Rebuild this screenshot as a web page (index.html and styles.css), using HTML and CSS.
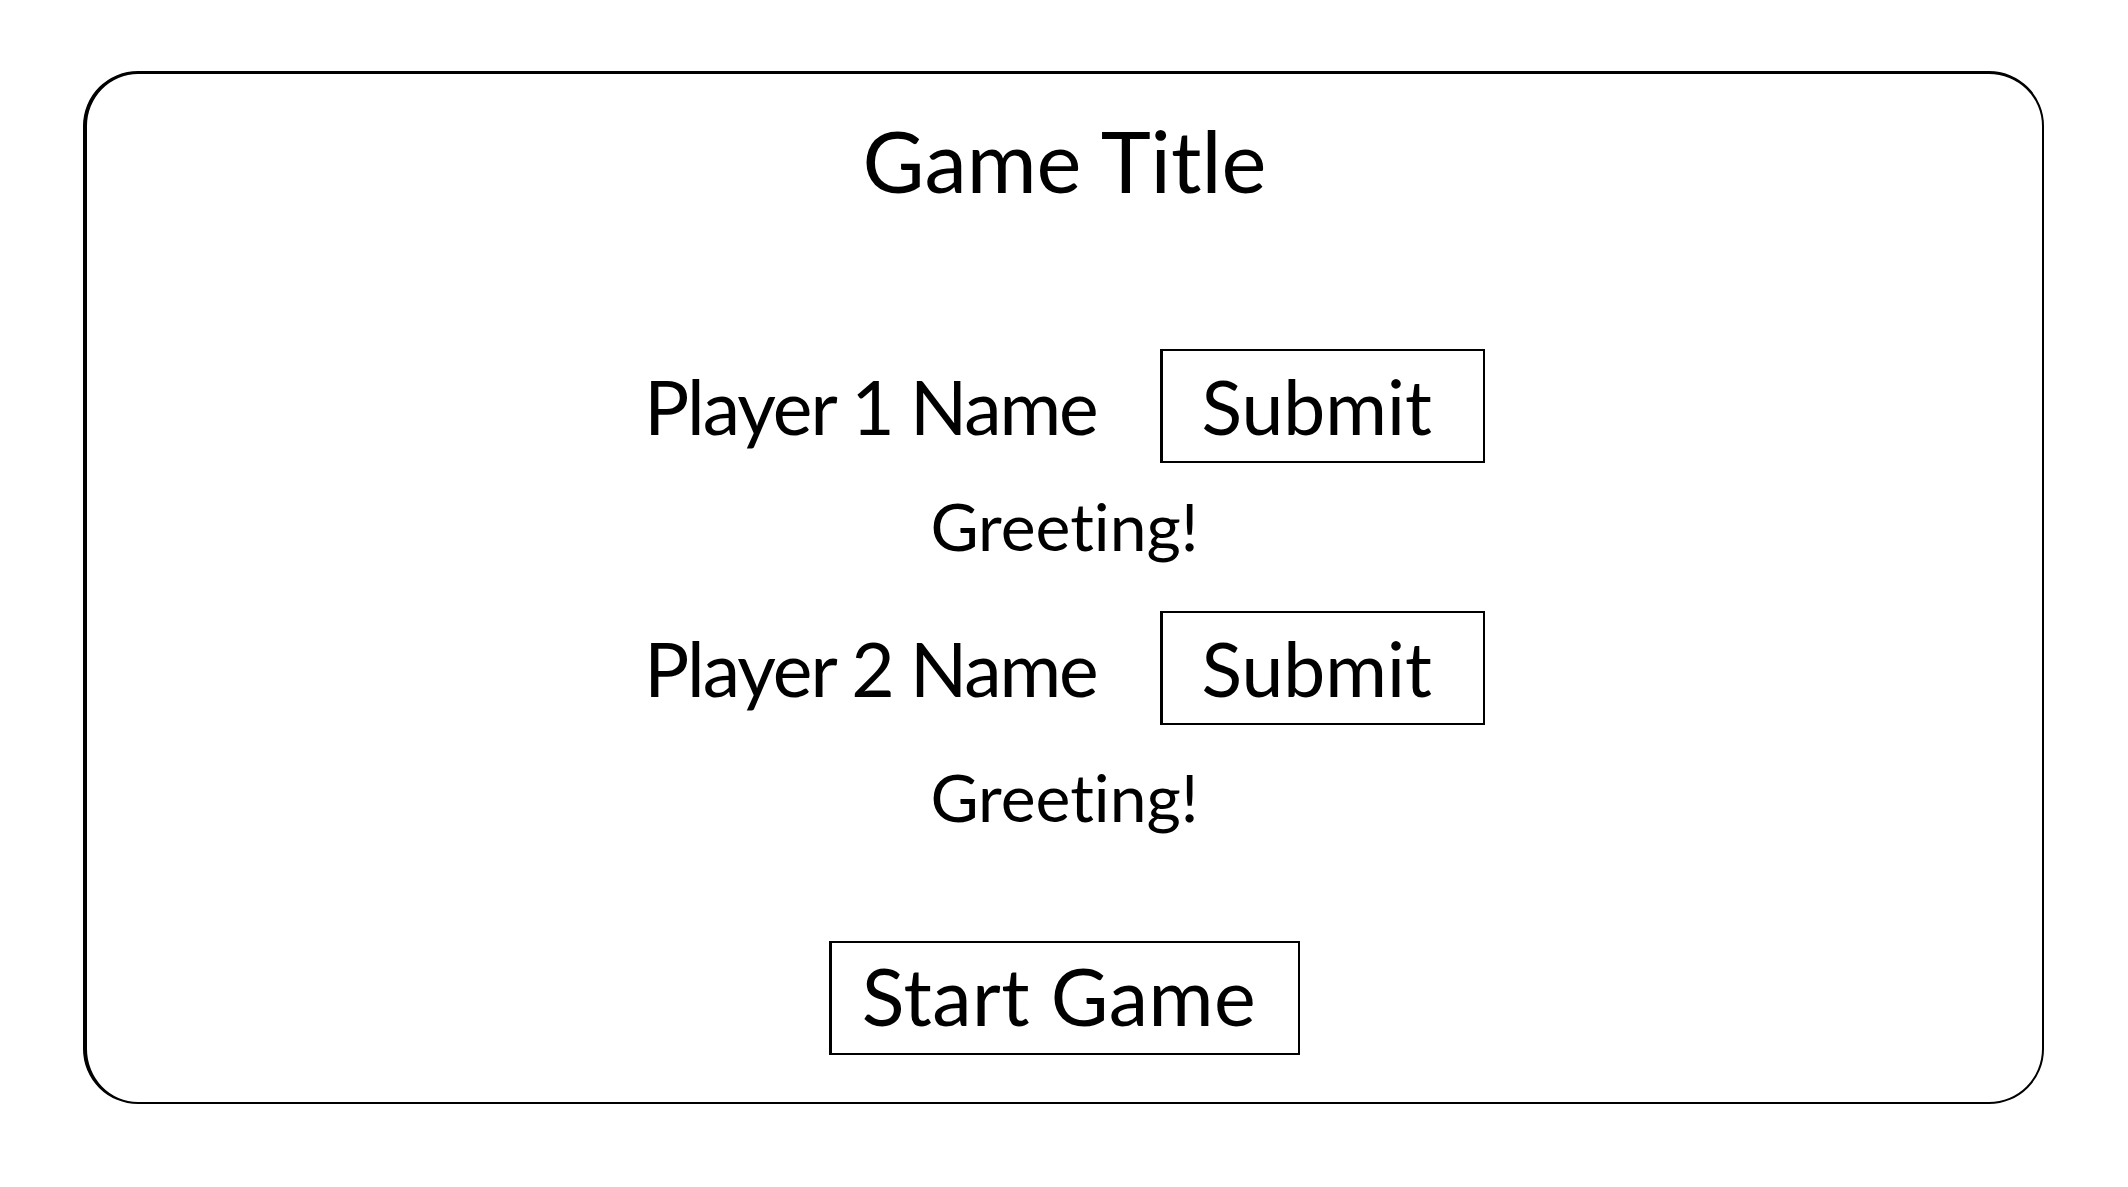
FILE: index.html
```html
<!DOCTYPE html>
<html>
<head>
<meta charset="utf-8">
<link rel="stylesheet" href="styles.css">
</head>
<body>
<main class="frame">
  <h1 class="title">Game Title</h1>
  <div class="player-row row-1">
    <span class="label">Player 1 Name</span>
    <button class="btn submit"><span class="btn-text">Submit</span></button>
  </div>
  <p class="greeting greeting-1">Greeting!</p>
  <div class="player-row row-2">
    <span class="label">Player 2 Name</span>
    <button class="btn submit"><span class="btn-text">Submit</span></button>
  </div>
  <p class="greeting greeting-2">Greeting!</p>
  <button class="btn start"><span class="btn-text">Start Game</span></button>
</main>
</body>
</html>
```
FILE: styles.css
```css
html, body {
  margin: 0;
  padding: 0;
  background: #ffffff;
}
body {
  font-family: Lato, "Open Sans", sans-serif;
  font-variant-ligatures: none;
  color: #000;
}
.frame {
  box-sizing: border-box;
  margin: 71px 0 0 83px;
  width: 1961px;
  height: 1033px;
  border-style: solid;
  border-color: #000;
  border-width: 3px 2px 2px 4px;
  border-radius: 55px;
  display: flex;
  flex-direction: column;
  align-items: center;
  padding-top: 44px;
}
.title {
  margin: 0;
  font-weight: 400;
  font-size: 85px;
  line-height: 85px;
}
.player-row {
  display: flex;
  align-items: baseline;
  gap: 63px;
}
.row-1 { margin-top: 146px; }
.row-2 { margin-top: 52px; }
.label {
  font-size: 75px;
  line-height: 75px;
  letter-spacing: -2px;
}
.btn {
  box-sizing: border-box;
  display: flex;
  align-items: center;
  justify-content: center;
  height: 114px;
  border: 2px solid #000;
  border-left-width: 3px;
  background: #fff;
  padding: 0;
  color: #000;
  font-family: inherit;
  font-variant-ligatures: none;
}
.submit {
  width: 325px;
  font-size: 75px;
  padding-right: 12px;
}
.btn-text {
  line-height: 1;
}
.greeting {
  margin: 0;
  font-size: 66px;
  line-height: 66px;
}
.greeting-1 { margin-top: 30px; }
.greeting-2 { margin-top: 39px; }
.start {
  margin-top: 111px;
  width: 471px;
  font-size: 79px;
  letter-spacing: 0.5px;
  padding: 0 12px 6px 0;
}
```
